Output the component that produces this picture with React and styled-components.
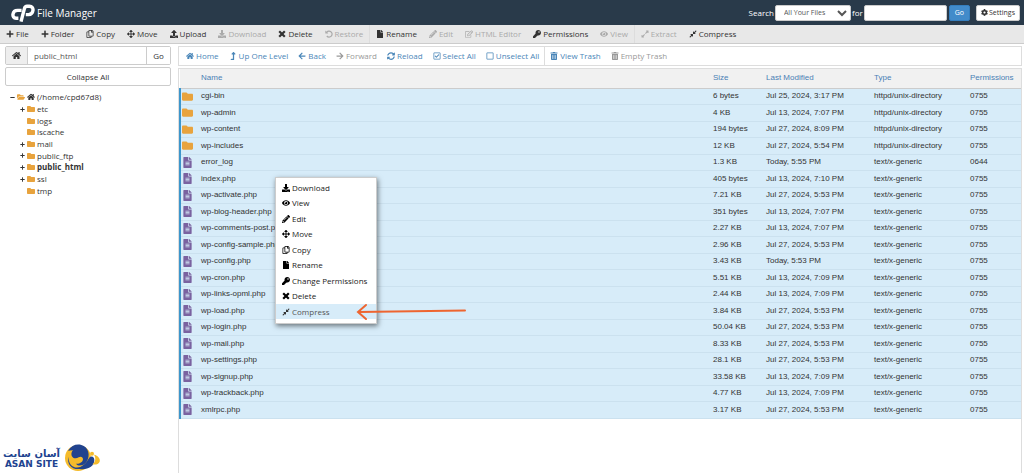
import React from 'react'
import styled, { createGlobalStyle, css } from 'styled-components'
import {
  FaPlus,
  FaRegCopy,
  FaArrowsAlt,
  FaUpload,
  FaDownload,
  FaFile,
  FaPencilAlt,
  FaRegEdit,
  FaKey,
  FaEye,
  FaExpandAlt,
  FaCompressAlt,
  FaHome,
  FaLevelUpAlt,
  FaArrowLeft,
  FaArrowRight,
  FaSyncAlt,
  FaRegCheckSquare,
  FaRegSquare,
  FaTrashAlt,
  FaFolder,
  FaFolderOpen,
  FaFileAlt,
  FaCog,
  FaMinus,
} from 'react-icons/fa'

const GlobalStyle = createGlobalStyle`
  * {
    box-sizing: border-box;
  }
  body {
    margin: 0;
    background: #fff;
    color: #333;
    font-family: 'Open Sans', 'Noto Sans', sans-serif;
    font-size: 8px;
    line-height: 12px;
  }
  button, input, select {
    font: inherit;
    color: inherit;
    margin: 0;
  }
`

const Page = styled.div`
  position: relative;
  display: flex;
  flex-direction: column;
  min-height: 100vh;
`

const Header = styled.header`
  display: flex;
  align-items: center;
  justify-content: space-between;
  height: 25px;
  padding: 0 4px 0 11px;
  background: #293a4a;
  color: #fff;
`

const Brand = styled.h1`
  display: flex;
  align-items: center;
  gap: 2px;
  margin: 0;
  font-size: 10px;
  font-weight: 400;
`

const SearchForm = styled.form`
  display: flex;
  align-items: center;
  gap: 1px;
`

const SearchSelect = styled.select`
  width: 76px;
  height: 16px;
  padding: 0 1px 0 4px;
  border: 1px solid #ccc;
  border-radius: 2px;
  background: #fff;
  color: #555;
  font-size: 7px;
`

const SearchInput = styled.input`
  width: 83px;
  height: 16px;
  padding: 0 4px;
  border: 1px solid #ccc;
  border-radius: 2px;
  background: #fff;
  color: #555;
`

const HeaderButton = styled.button`
  display: flex;
  align-items: center;
  justify-content: center;
  gap: 1px;
  height: 16px;
  padding: 0 ${({ $primary }) => ($primary ? '5px' : '4px')};
  border: 1px solid ${({ $primary }) => ($primary ? '#357ebd' : '#ccc')};
  border-radius: 2px;
  background: ${({ $primary }) => ($primary ? '#428bca' : '#fff')};
  color: ${({ $primary }) => ($primary ? '#fff' : '#333')};
  font-size: 7px;
  margin-left: ${({ $primary }) => ($primary ? '1px' : '5px')};
`

const bar = css`
  display: flex;
  align-items: stretch;
`

const Toolbar = styled.nav`
  ${bar}
  height: 19px;
  background: #e8e8e8;
  border-bottom: 1px solid #ccc;
`

const ActionBar = styled.nav`
  ${bar}
  height: 20px;
  margin-bottom: 2px;
  padding-left: 2px;
  border: 1px solid #ddd;
`

const ToolButton = styled.button`
  display: flex;
  align-items: center;
  gap: 2px;
  padding: 0 ${({ $link }) => ($link ? '5px' : '6px')};
  border: 0;
  border-right: ${({ $last }) => ($last ? '1px solid #ddd' : '0')};
  background: none;
  color: ${({ $link }) => ($link ? '#4a86b8' : '#333')};
  white-space: nowrap;

  &:disabled {
    color: ${({ $link }) => ($link ? '#999' : '#aaa')};
  }
`

const Body = styled.div`
  display: grid;
  grid-template-columns: 171px minmax(0, 1fr);
  column-gap: 7px;
  flex: 1;
  padding: 2px 2px 0 0;
`

const Sidebar = styled.aside`
  display: flex;
  flex-direction: column;
  padding-left: 5px;
`

const PathForm = styled.form`
  display: flex;
  height: 19px;
  border: 1px solid #ccc;
  border-radius: 2px;
`

const PathHome = styled.span`
  display: flex;
  align-items: center;
  justify-content: center;
  width: 22px;
  border-right: 1px solid #ccc;
  background: #eee;
  font-size: 9px;
`

const PathInput = styled.input`
  flex: 1;
  min-width: 0;
  padding: 0 6px;
  border: 0;
  color: #555;
`

const PathButton = styled.button`
  width: 24px;
  padding: 0;
  border: 0;
  border-left: 1px solid #ccc;
  background: #fff;
`

const CollapseButton = styled.button`
  height: 19px;
  margin-top: 2px;
  border: 1px solid #ccc;
  border-radius: 2px;
  background: #fff;
`

const Tree = styled.ul`
  margin: 5px 0 0;
  padding: 0;
  list-style: none;
`

const TreeItem = styled.li`
  display: flex;
  align-items: center;
  gap: 2px;
  height: 12px;
  padding-left: ${({ $root }) => ($root ? '5px' : '15px')};
  font-weight: ${({ $current }) => ($current ? 700 : 400)};

  &:nth-child(3n) {
    height: 11px;
  }
  .toggle {
    width: 5px;
    font-size: 5px;
  }
  .folder {
    color: #e8a33d;
  }
`

const Files = styled.main`
  display: flex;
  flex-direction: column;
`

const TablePanel = styled.div`
  flex: 1;
  border: 1px solid #ddd;
  border-bottom: 0;
`

const Table = styled.table`
  width: 100%;
  table-layout: fixed;
  border-collapse: collapse;
  font-family: 'Liberation Sans', Arial, sans-serif;
  line-height: 10px;

  th,
  td {
    padding: 0;
    text-align: left;
    white-space: nowrap;
  }
  th {
    height: 19px;
    border-bottom: 1px solid #ccc;
    background: #f1f1f1;
    color: #4a7fb5;
    font-weight: 400;
  }
`

const Col = styled.col`
  width: ${({ $width }) => $width};
`

const FileRow = styled.tr`
  height: 16px;
  background: #d7ecf9;
  border-bottom: 1px solid #cbe1ef;

  &:nth-child(even) {
    height: 17px;
  }
  td:first-child {
    border-left: 2px solid #3d96cb;
  }
`

const FileIcon = styled.span`
  display: flex;
  padding-left: 1px;
  color: ${({ $dir }) => ($dir ? '#e8a33d' : '#7a62a0')};
  font-size: 11px;
`

const Menu = styled.ul`
  position: absolute;
  top: 177px;
  left: 275px;
  width: 102px;
  margin: 0;
  padding: 2px 0 4px;
  border: 1px solid #ccc;
  background: #fff;
  box-shadow: 1px 2px 5px rgba(0, 0, 0, 0.5);
  list-style: none;
`

const MenuItem = styled.li`
  height: 15px;

  &:nth-child(even) {
    height: 16px;
  }
  button {
    display: flex;
    align-items: center;
    gap: 2px;
    width: 100%;
    height: 100%;
    padding: 0 6px;
    border: 0;
    background: ${({ $active }) => ($active ? '#d7ecf9' : 'none')};
    color: ${({ $active }) => ($active ? '#555' : '#222')};
    white-space: nowrap;
  }
  svg {
    color: ${({ $active }) => ($active ? '#333' : '#000')};
  }
`

const Pointer = styled.svg`
  position: absolute;
  top: 302px;
  left: 355px;
`

const SiteMark = styled.div`
  display: flex;
  align-items: center;
  gap: 4px;
  margin: auto 0 0 -2px;
  color: #21438f;
  font-family: 'DejaVu Sans', sans-serif;
  font-size: 9px;
  font-weight: 700;
  line-height: 9px;
`

const SiteName = styled.div`
  display: flex;
  flex-direction: column;
  align-items: center;

  b {
    font-size: 10px;
    line-height: 13px;
  }
`

const CpLogo = () => (
  <svg width="24" height="18" viewBox="0 0 24 18" fill="none" stroke="#fff" strokeWidth="3.4">
    <path d="M10.6 6.4H6.6C1 6.4.4 14.2 5 14.2H7.4" />
    <path d="M10 17.6 13.4 4.6C13.8 3 14.4 2.2 16 2.2h2.4c5.4 0 4.4 8.4-.8 8.4h-2.8" />
  </svg>
)

const TimesIcon = () => (
  <svg width="8" height="8" viewBox="0 0 8 8" stroke="currentColor" strokeWidth="2.2">
    <path d="M1.2 1.2l5.6 5.6M6.8 1.2L1.2 6.8" />
  </svg>
)

const UndoIcon = () => (
  <svg width="8" height="8" viewBox="0 0 8 8" fill="none" stroke="currentColor">
    <path d="M1.5 2.6A3 3 0 1 1 1.8 6" strokeWidth="1.2" />
    <path d="M.3.5v3h3z" fill="currentColor" stroke="none" />
  </svg>
)

const Swirl = () => (
  <svg width="38" height="31" viewBox="0 0 114 93">
    <circle cx="42" cy="48" r="39" fill="#f5bb2b" />
    <path d="M12 26C22 10 38 5 52 9c22 6 28 32 16 50-9 13-26 15-32 6 8 2 20-3 21-13 0-8-7-10-13-6-8 5-18 3-21-5-2-6 0-12 4-16-6 0-11 1-15 1z" fill="#21438f" />
    <path d="M14 44c-2 26 18 38 36 30 14-6 20-18 27-28 6-6 14-2 14 8 0 20-20 30-44 27C24 84 7 66 14 44z" fill="#21438f" />
    <path d="M90 38c12 2 20 12 17 21-3 8-13 10-22 8 9-7 12-18 5-29z" fill="#f5bb2b" />
    <circle cx="84" cy="35" r="6" fill="#f5bb2b" />
  </svg>
)

const tools = [
  { label: 'File', Icon: FaPlus },
  { label: 'Folder', Icon: FaPlus },
  { label: 'Copy', Icon: FaRegCopy },
  { label: 'Move', Icon: FaArrowsAlt },
  { label: 'Upload', Icon: FaUpload },
  { label: 'Download', Icon: FaDownload, disabled: true },
  { label: 'Delete', Icon: TimesIcon },
  { label: 'Restore', Icon: UndoIcon, disabled: true, last: true },
  { label: 'Rename', Icon: FaFile },
  { label: 'Edit', Icon: FaPencilAlt, disabled: true },
  { label: 'HTML Editor', Icon: FaRegEdit, disabled: true },
  { label: 'Permissions', Icon: FaKey },
  { label: 'View', Icon: FaEye, disabled: true, last: true },
  { label: 'Extract', Icon: FaExpandAlt, disabled: true },
  { label: 'Compress', Icon: FaCompressAlt },
]

const actions = [
  { label: 'Home', Icon: FaHome },
  { label: 'Up One Level', Icon: FaLevelUpAlt },
  { label: 'Back', Icon: FaArrowLeft },
  { label: 'Forward', Icon: FaArrowRight, disabled: true },
  { label: 'Reload', Icon: FaSyncAlt },
  { label: 'Select All', Icon: FaRegCheckSquare },
  { label: 'Unselect All', Icon: FaRegSquare, last: true },
  { label: 'View Trash', Icon: FaTrashAlt },
  { label: 'Empty Trash', Icon: FaTrashAlt, disabled: true },
]

const menu = [
  { label: 'Download', Icon: FaDownload },
  { label: 'View', Icon: FaEye },
  { label: 'Edit', Icon: FaPencilAlt },
  { label: 'Move', Icon: FaArrowsAlt },
  { label: 'Copy', Icon: FaRegCopy },
  { label: 'Rename', Icon: FaFile },
  { label: 'Change Permissions', Icon: FaKey },
  { label: 'Delete', Icon: TimesIcon },
  { label: 'Compress', Icon: FaCompressAlt, active: true },
]

const folders = [
  { name: 'etc', open: true },
  { name: 'logs' },
  { name: 'lscache' },
  { name: 'mail', open: true },
  { name: 'public_ftp', open: true },
  { name: 'public_html', open: true, current: true },
  { name: 'ssl', open: true },
  { name: 'tmp' },
]

const DIR = 'httpd/unix-directory'
const TEXT = 'text/x-generic'

const files = [
  ['cgi-bin', '6 bytes', 'Jul 25, 2024, 3:17 PM', DIR, '0755'],
  ['wp-admin', '4 KB', 'Jul 13, 2024, 7:07 PM', DIR, '0755'],
  ['wp-content', '194 bytes', 'Jul 27, 2024, 8:09 PM', DIR, '0755'],
  ['wp-includes', '12 KB', 'Jul 27, 2024, 5:54 PM', DIR, '0755'],
  ['error_log', '1.3 KB', 'Today, 5:55 PM', TEXT, '0644'],
  ['index.php', '405 bytes', 'Jul 13, 2024, 7:10 PM', TEXT, '0755'],
  ['wp-activate.php', '7.21 KB', 'Jul 27, 2024, 5:53 PM', TEXT, '0755'],
  ['wp-blog-header.php', '351 bytes', 'Jul 13, 2024, 7:07 PM', TEXT, '0755'],
  ['wp-comments-post.php', '2.27 KB', 'Jul 13, 2024, 7:07 PM', TEXT, '0755'],
  ['wp-config-sample.php', '2.96 KB', 'Jul 27, 2024, 5:53 PM', TEXT, '0755'],
  ['wp-config.php', '3.43 KB', 'Today, 5:53 PM', TEXT, '0755'],
  ['wp-cron.php', '5.51 KB', 'Jul 13, 2024, 7:09 PM', TEXT, '0755'],
  ['wp-links-opml.php', '2.44 KB', 'Jul 13, 2024, 7:09 PM', TEXT, '0755'],
  ['wp-load.php', '3.84 KB', 'Jul 27, 2024, 5:53 PM', TEXT, '0755'],
  ['wp-login.php', '50.04 KB', 'Jul 27, 2024, 5:53 PM', TEXT, '0755'],
  ['wp-mail.php', '8.33 KB', 'Jul 27, 2024, 5:53 PM', TEXT, '0755'],
  ['wp-settings.php', '28.1 KB', 'Jul 27, 2024, 5:53 PM', TEXT, '0755'],
  ['wp-signup.php', '33.58 KB', 'Jul 13, 2024, 7:09 PM', TEXT, '0755'],
  ['wp-trackback.php', '4.77 KB', 'Jul 13, 2024, 7:09 PM', TEXT, '0755'],
  ['xmlrpc.php', '3.17 KB', 'Jul 27, 2024, 5:53 PM', TEXT, '0755'],
]

function FileTable() {
  return (
    <Table>
      <colgroup>
        <Col $width="21px" />
        <Col $width="auto" />
        <Col $width="53px" />
        <Col $width="108px" />
        <Col $width="96px" />
        <Col $width="51px" />
      </colgroup>
      <thead>
        <tr>
          <th aria-label="Icon" />
          <th>Name</th>
          <th>Size</th>
          <th>Last Modified</th>
          <th>Type</th>
          <th>Permissions</th>
        </tr>
      </thead>
      <tbody>
        {files.map(([name, size, modified, type, perms]) => (
          <FileRow key={name}>
            <td>
              <FileIcon $dir={type === DIR}>{type === DIR ? <FaFolder /> : <FaFileAlt />}</FileIcon>
            </td>
            <td>{name}</td>
            <td>{size}</td>
            <td>{modified}</td>
            <td>{type}</td>
            <td>{perms}</td>
          </FileRow>
        ))}
      </tbody>
    </Table>
  )
}

export default function App() {
  return (
    <Page>
      <GlobalStyle />
      <Header>
        <Brand>
          <CpLogo />
          File Manager
        </Brand>
        <SearchForm onSubmit={(e) => e.preventDefault()}>
          <label htmlFor="scope">Search</label>
          <SearchSelect id="scope">
            <option>All Your Files</option>
          </SearchSelect>
          <label htmlFor="query">for</label>
          <SearchInput id="query" />
          <HeaderButton $primary>Go</HeaderButton>
          <HeaderButton type="button">
            <FaCog />
            Settings
          </HeaderButton>
        </SearchForm>
      </Header>
      <Toolbar>
        {tools.map(({ label, Icon, disabled, last }) => (
          <ToolButton key={label} disabled={disabled} $last={last}>
            <Icon />
            {label}
          </ToolButton>
        ))}
      </Toolbar>
      <Body>
        <Sidebar>
          <PathForm onSubmit={(e) => e.preventDefault()}>
            <PathHome>
              <FaHome />
            </PathHome>
            <PathInput aria-label="Path" defaultValue="public_html" />
            <PathButton>Go</PathButton>
          </PathForm>
          <CollapseButton>Collapse All</CollapseButton>
          <Tree>
            <TreeItem $root>
              <FaMinus className="toggle" />
              <FaFolderOpen className="folder" />
              <FaHome />
              (/home/cpd67d8)
            </TreeItem>
            {folders.map(({ name, open, current }) => (
              <TreeItem key={name} $current={current}>
                {open ? <FaPlus className="toggle" /> : <span className="toggle" />}
                <FaFolder className="folder" />
                {name}
              </TreeItem>
            ))}
          </Tree>
          <SiteMark>
            <SiteName>
              <b lang="fa">آسان سایت</b>
              <span>ASAN SITE</span>
            </SiteName>
            <Swirl />
          </SiteMark>
        </Sidebar>
        <Files>
          <ActionBar>
            {actions.map(({ label, Icon, disabled, last }) => (
              <ToolButton key={label} disabled={disabled} $last={last} $link>
                <Icon />
                {label}
              </ToolButton>
            ))}
          </ActionBar>
          <TablePanel>
            <FileTable />
          </TablePanel>
        </Files>
      </Body>
      <Menu>
        {menu.map(({ label, Icon, active }) => (
          <MenuItem key={label} $active={active}>
            <button>
              <Icon />
              {label}
            </button>
          </MenuItem>
        ))}
      </Menu>
      <Pointer width="112" height="20" viewBox="0 0 112 20" fill="none" stroke="#ee6530" strokeWidth="2" strokeLinecap="round">
        <path d="M110 8.5 4 10M11 3 3 10l8 7" />
      </Pointer>
    </Page>
  )
}
